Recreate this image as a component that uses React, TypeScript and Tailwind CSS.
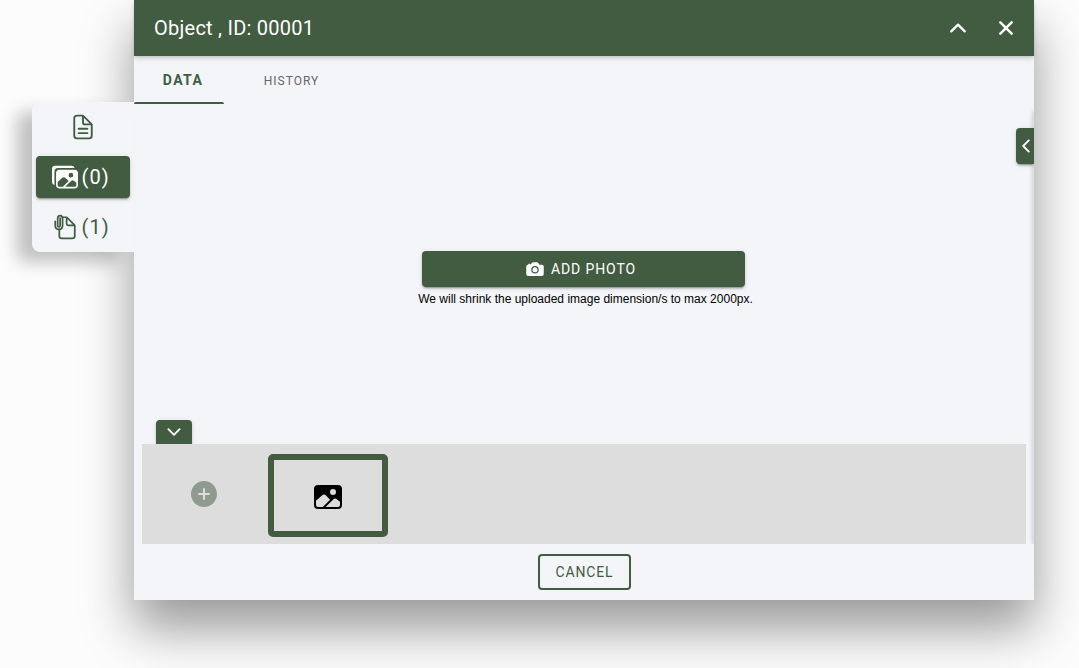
import {
  IoAddCircle,
  IoCamera,
  IoChevronBack,
  IoChevronDown,
  IoChevronUp,
  IoClose,
  IoDocumentAttachOutline,
  IoDocumentTextOutline,
  IoImage,
  IoImages,
} from 'react-icons/io5';

const raised = 'shadow-[0_3px_1px_-2px_rgba(0,0,0,0.2),0_2px_2px_0_rgba(0,0,0,0.14),0_1px_5px_0_rgba(0,0,0,0.12)]';

function SideNav() {
  return (
    <nav className="z-10 ml-8 mt-[102px] flex h-[150px] w-[102px] shrink-0 flex-col rounded-l-lg bg-[#f3f5f9] px-1 text-[20px] tracking-[1.1px] text-[#425c42] shadow-[-15px_10px_17px_rgba(0,0,0,0.24)]">
      <button className="flex h-[50px] items-center justify-center">
        <IoDocumentTextOutline size={28} className="[&_path]:[stroke-width:34px]" />
      </button>
      <button className={`my-1 flex h-[42px] items-center rounded bg-[#425c42] pl-4 text-white ${raised}`}>
        <IoImages size={26} />
        <span className="ml-[3.5px]">(0)</span>
      </button>
      <button className="flex h-[50px] items-center pl-4">
        <IoDocumentAttachOutline size={26} className="[&_path]:[stroke-width:34px]" />
        <span className="ml-[3.5px]">(1)</span>
      </button>
    </nav>
  );
}

function Header() {
  return (
    <header className="z-10 flex h-14 shrink-0 items-center bg-[#425c42] pl-5 pr-[15px] text-white shadow-[0_2px_4px_-1px_rgba(0,0,0,0.2),0_4px_5px_0_rgba(0,0,0,0.06)]">
      <h1 className="flex-1 text-[20px] tracking-[0.25px]">Object , ID: 00001</h1>
      <button className="mr-[23px]"><IoChevronUp size={24} /></button>
      <button><IoClose size={26} /></button>
    </header>
  );
}

export default function App() {
  return (
    <div className="flex h-[668px] w-[1079px] items-start overflow-hidden bg-[#fcfcfc] font-[Roboto,sans-serif]">
      <SideNav />
      <main className="flex h-[600px] w-[900px] shrink-0 flex-col bg-[#f3f5f9] shadow-[0_28px_48px_rgba(0,0,0,0.4)]">
        <Header />
        <div className="flex h-12 shrink-0">
          <button className="flex w-[90px] flex-col items-center justify-between pl-2 text-[14px] font-bold tracking-[1.35px] text-[#425c42]">
            <span className="mt-3.5 leading-5">DATA</span>
            <span className="-ml-2 h-0.5 w-[90px] rounded-t-[2px] bg-[#425c42]" />
          </button>
          <button className="w-[134px] pl-px pt-px text-[12px] tracking-[1px] text-[#666]">HISTORY</button>
        </div>
        <section className="relative flex h-[440px] shrink-0 flex-col overflow-hidden px-2">
          <div className="flex h-[316px] flex-col items-center pt-[147px]">
            <button className={`mr-px flex h-9 w-[323px] items-center justify-center rounded bg-[#425c42] pr-1.5 text-[14px] tracking-[0.9px] text-white ${raised}`}>
              <IoCamera size={20} className="mr-1.5" />
              ADD PHOTO
            </button>
            <p className="ml-[3px] mt-1 whitespace-nowrap font-['Liberation_Sans',sans-serif] text-[12px] leading-4 text-black">
              We will shrink the uploaded image dimension/s to max 2000px.
            </p>
          </div>
          <button className={`ml-3.5 flex h-6 w-9 shrink-0 items-center justify-center rounded-t bg-[#425c42] text-white ${raised}`}>
            <IoChevronDown size={20} />
          </button>
          <div className="z-10 flex h-[100px] shrink-0 items-start bg-[#ddd] pl-[46px]">
            <button className="mt-[34px] text-[#425c42] opacity-50"><IoAddCircle size={32} /></button>
            <button className="ml-12 mt-2.5 flex h-[83px] w-[120px] items-center justify-center rounded-[5px] border-[6px] border-[#425c42] pt-0.5 text-black">
              <IoImage size={32} />
            </button>
          </div>
          <aside className="absolute bottom-0 right-0 top-2 w-0 shadow-[0_0_4px_1px_rgba(0,0,0,0.3)]" />
          <button className={`absolute right-0 top-6 flex h-9 w-[18px] items-center justify-center rounded-l bg-[#425c42] pl-0.5 text-white ${raised}`}>
            <IoChevronBack size={20} className="shrink-0" />
          </button>
        </section>
        <footer className="flex h-14 items-center justify-center">
          <button className="h-9 w-[93px] rounded border-2 border-[#425c42] pl-px text-[14px] tracking-[0.85px] text-[#425c42]">CANCEL</button>
        </footer>
      </main>
    </div>
  );
}
